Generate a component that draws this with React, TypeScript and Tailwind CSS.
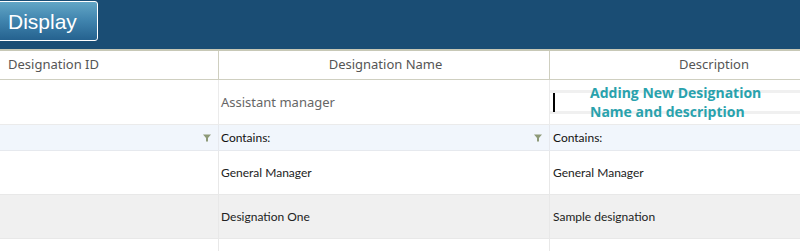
import { ReactNode } from "react";

const font = { fontFamily: '"Noto Sans", "Open Sans", sans-serif' };
const lato = { fontFamily: 'Lato, "Noto Sans", sans-serif' };

function FilterIcon() {
  return (
    <svg width="8" height="8" viewBox="0 0 8 8" className="shrink-0">
      <path d="M0 0.5h8L5 4v3.5H3V4z" fill="#8e9a78" />
    </svg>
  );
}

function Row({ h, bg, line, cells }: { h: string; bg: string; line: string; cells: ReactNode[] }) {
  return (
    <div className={`flex ${h} ${bg} border-b ${line}`}>
      <div className={`w-[219px] shrink-0 border-r ${line} flex items-center`}>{cells[0]}</div>
      <div className={`w-[331px] shrink-0 border-r ${line} flex items-center`}>{cells[1]}</div>
      <div className="flex-1 flex items-center">{cells[2]}</div>
    </div>
  );
}

export default function App() {
  return (
    <div className="w-[800px] h-[251px] overflow-hidden bg-white" style={font}>
      <div className="h-[49px] bg-[#1a4d74] flex items-start pt-[1px]">
        <div className="ml-[-6px] w-[104px] h-[40px] rounded-[3px] border border-white bg-gradient-to-b from-[#62a6c6] via-[#3f83ad] to-[#25628f] flex items-center pl-[13px]">
          <span className="text-white text-[21px] leading-none" style={{ fontFamily: '"Liberation Sans", Arial, sans-serif' }}>
            Display
          </span>
        </div>
      </div>
      <div className="h-[2px] bg-[#c7c8b6]" />

      <Row
        h="h-[29px]"
        bg="bg-white"
        line="border-[#cfcfc0]"
        cells={[
          <span className="pl-[8px] text-[13px] text-[#555]">Designation ID</span>,
          <span className="w-full text-center pl-[3px] text-[13px] text-[#555]">Designation Name</span>,
          <span className="w-full text-right pr-[51px] text-[13px] text-[#555]">Description</span>,
        ]}
      />

      <Row
        h="h-[45px]"
        bg="bg-white"
        line="border-[#ebebeb]"
        cells={[
          null,
          <span className="pl-[2px] pt-[1px] text-[13px] text-[#666]">Assistant manager</span>,
          <div className="relative w-full h-full flex items-center">
            <div className="w-full h-[24px] border-y-[3px] border-[#f0f0f0] flex items-center pl-[3px]">
              <div className="w-[2px] h-[19px] bg-black" />
            </div>
            <div
              className="absolute left-[40px] top-[3px] text-[14px] font-bold leading-[19px] text-[#29a2ad]"
              style={{ fontFamily: '"Open Sans", "Noto Sans", sans-serif' }}
            >
              Adding New Designation
              <br />
              Name and description
            </div>
          </div>,
        ]}
      />

      <Row
        h="h-[26px]"
        bg="bg-[#f1f6fc]"
        line="border-[#e6e9ee]"
        cells={[
          <div className="w-full flex justify-end pr-[7px]">
            <FilterIcon />
          </div>,
          <div className="w-full flex items-center justify-between pl-[2px] pr-[7px]">
            <span className="text-[12px] text-[#111]" style={lato}>Contains:</span>
            <FilterIcon />
          </div>,
          <span className="pl-[3px] text-[12px] text-[#111]" style={lato}>Contains:</span>,
        ]}
      />

      <Row
        h="h-[44px]"
        bg="bg-white"
        line="border-[#e8e8e8]"
        cells={[
          null,
          <span className="pl-[2px] text-[12px] text-[#222]" style={lato}>General Manager</span>,
          <span className="pl-[3px] text-[12px] text-[#222]" style={lato}>General Manager</span>,
        ]}
      />

      <Row
        h="h-[44px]"
        bg="bg-[#f0f0f0]"
        line="border-[#e8e8e8]"
        cells={[
          null,
          <span className="pl-[2px] text-[12px] text-[#222]" style={lato}>Designation One</span>,
          <span className="pl-[3px] text-[12px] text-[#222]" style={lato}>Sample designation</span>,
        ]}
      />

      <Row h="h-[44px]" bg="bg-white" line="border-[#e8e8e8]" cells={[null, null, null]} />
    </div>
  );
}
